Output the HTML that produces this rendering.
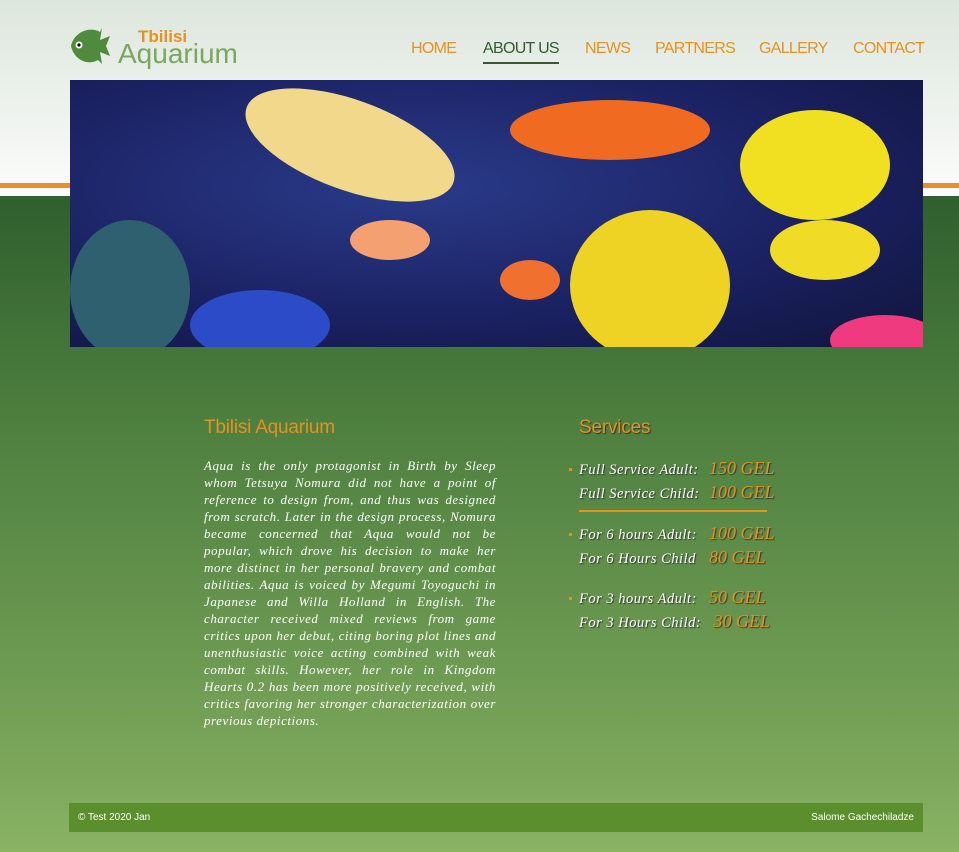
<!DOCTYPE html><html><head><style>
*{margin:0;padding:0;box-sizing:border-box}
body{width:959px;height:852px;position:relative;overflow:hidden;font-family:"Liberation Sans",sans-serif;background:linear-gradient(#2f5f2d 195px,#4d7f3f 420px,#7aa55a 760px,#8ab364 852px)}
.top{position:absolute;left:0;top:0;width:959px;height:196px;background:linear-gradient(#dde6dd,#fbfcfb)}
.line{position:absolute;left:0;top:183px;width:959px;height:5px;background:#e5921e}
.nav{position:absolute;top:40px;font-size:16px;color:#e5921e;letter-spacing:-0.7px}
.hero{position:absolute;left:70px;top:80px;width:853px;height:267px;overflow:hidden;background:radial-gradient(ellipse at 40% 40%,#2a3b8a,#1a2060 60%,#10153a)}
.hero div{position:absolute;border-radius:50%}
.t{position:absolute;font-family:"Liberation Serif",serif;font-style:italic}
</style></head><body>
<div class="top"></div><div class="line"></div>
<svg style="position:absolute;left:68px;top:24px" width="44" height="44" viewBox="0 0 44 44"><path d="M3 22C6 8 22 2 32 8L34 4 32 16 42 12 38 22 42 32 32 28 34 40 30 36C20 42 6 36 3 22Z" fill="#4f8a3f"/><circle cx="11" cy="21" r="3.5" fill="#fff"/><circle cx="11" cy="21" r="1.6" fill="#000"/></svg>
<div style="position:absolute;left:138px;top:27px;font-weight:bold;font-size:17px;color:#e5921e">Tbilisi</div>
<div style="position:absolute;left:118px;top:38px;font-size:28px;color:#7aa65e;letter-spacing:0px">Aquarium</div>
<div class="nav" style="left:411px">HOME</div>
<div class="nav" style="left:483px;color:#2f5e2c;border-bottom:2px solid #2f5e2c;padding-bottom:4px">ABOUT US</div>
<div class="nav" style="left:585px">NEWS</div>
<div class="nav" style="left:655px">PARTNERS</div>
<div class="nav" style="left:759px">GALLERY</div>
<div class="nav" style="left:853px">CONTACT</div>
<div class="hero">
<div style="left:170px;top:20px;width:220px;height:90px;background:#f2d88a;transform:rotate(20deg)"></div>
<div style="left:440px;top:20px;width:200px;height:60px;background:#f06a22"></div>
<div style="left:670px;top:30px;width:150px;height:110px;background:#f1e021"></div>
<div style="left:500px;top:130px;width:160px;height:150px;background:#eed324"></div>
<div style="left:700px;top:140px;width:110px;height:60px;background:#f0dc26"></div>
<div style="left:120px;top:210px;width:140px;height:70px;background:#2c4bc8"></div>
<div style="left:0;top:140px;width:120px;height:140px;background:#2f6070"></div>
<div style="left:280px;top:140px;width:80px;height:40px;background:#f4a070"></div>
<div style="left:430px;top:180px;width:60px;height:40px;background:#f07030"></div>
<div style="left:760px;top:235px;width:110px;height:50px;background:#ef3a80"></div>
</div>
<div style="position:absolute;left:204px;top:417px;font-size:19px;color:#e5921e;letter-spacing:-0.2px">Tbilisi Aquarium</div>
<div class="t" style="left:204px;top:457px;width:292px;font-size:13px;letter-spacing:0.55px;line-height:17px;color:#fff;text-align:justify">Aqua is the only protagonist in Birth by Sleep whom Tetsuya Nomura did not have a point of reference to design from, and thus was designed from scratch. Later in the design process, Nomura became concerned that Aqua would not be popular, which drove his decision to make her more distinct in her personal bravery and combat abilities. Aqua is voiced by Megumi Toyoguchi in Japanese and Willa Holland in English. The character received mixed reviews from game critics upon her debut, citing boring plot lines and unenthusiastic voice acting combined with weak combat skills. However, her role in Kingdom Hearts 0.2 has been more positively received, with critics favoring her stronger characterization over previous depictions.</div>
<div style="position:absolute;left:579px;top:417px;font-size:19px;color:#e5921e;text-shadow:1px 1px 1px #333;letter-spacing:-0.2px">Services</div>
<div style="position:absolute;left:579px;top:510px;width:188px;height:2px;background:#e5921e"></div>
<div class="t" style="left:579px;top:458px;font-size:14.5px;letter-spacing:0.5px;color:#fff;line-height:24px;text-shadow:1px 1px 1px #333">Full Service Adult:<br>Full Service Child:</div>
<div class="t" style="left:579px;top:523px;font-size:14.5px;letter-spacing:0.5px;color:#fff;line-height:24px;text-shadow:1px 1px 1px #333">For 6 hours Adult:<br>For 6 Hours Child</div>
<div class="t" style="left:579px;top:587px;font-size:14.5px;letter-spacing:0.5px;color:#fff;line-height:24px;text-shadow:1px 1px 1px #333">For 3 hours Adult:<br>For 3 Hours Child:</div>
<div class="t" style="left:709px;top:456px;font-size:18px;color:#e5921e;line-height:24px;text-shadow:1px 1px 1px #333">150 GEL<br>100 GEL</div>
<div class="t" style="left:709px;top:521px;font-size:18px;color:#e5921e;line-height:24px;text-shadow:1px 1px 1px #333">100 GEL<br>80 GEL</div>
<div class="t" style="left:709px;top:585px;font-size:18px;color:#e5921e;line-height:24px;text-shadow:1px 1px 1px #333">50 GEL<br>&nbsp;30 GEL</div>
<div style="position:absolute;left:569px;top:468px;width:3px;height:3px;background:#e5921e"></div>
<div style="position:absolute;left:569px;top:533px;width:3px;height:3px;background:#e5921e"></div>
<div style="position:absolute;left:569px;top:597px;width:3px;height:3px;background:#e5921e"></div>
<div style="position:absolute;left:69px;top:803px;width:854px;height:29px;background:#5b8f2d;color:#fff;font-size:10px">
<span style="position:absolute;left:9px;top:9px">© Test 2020 Jan</span>
<span style="position:absolute;right:9px;top:9px">Salome Gachechiladze</span></div>
</body></html>
